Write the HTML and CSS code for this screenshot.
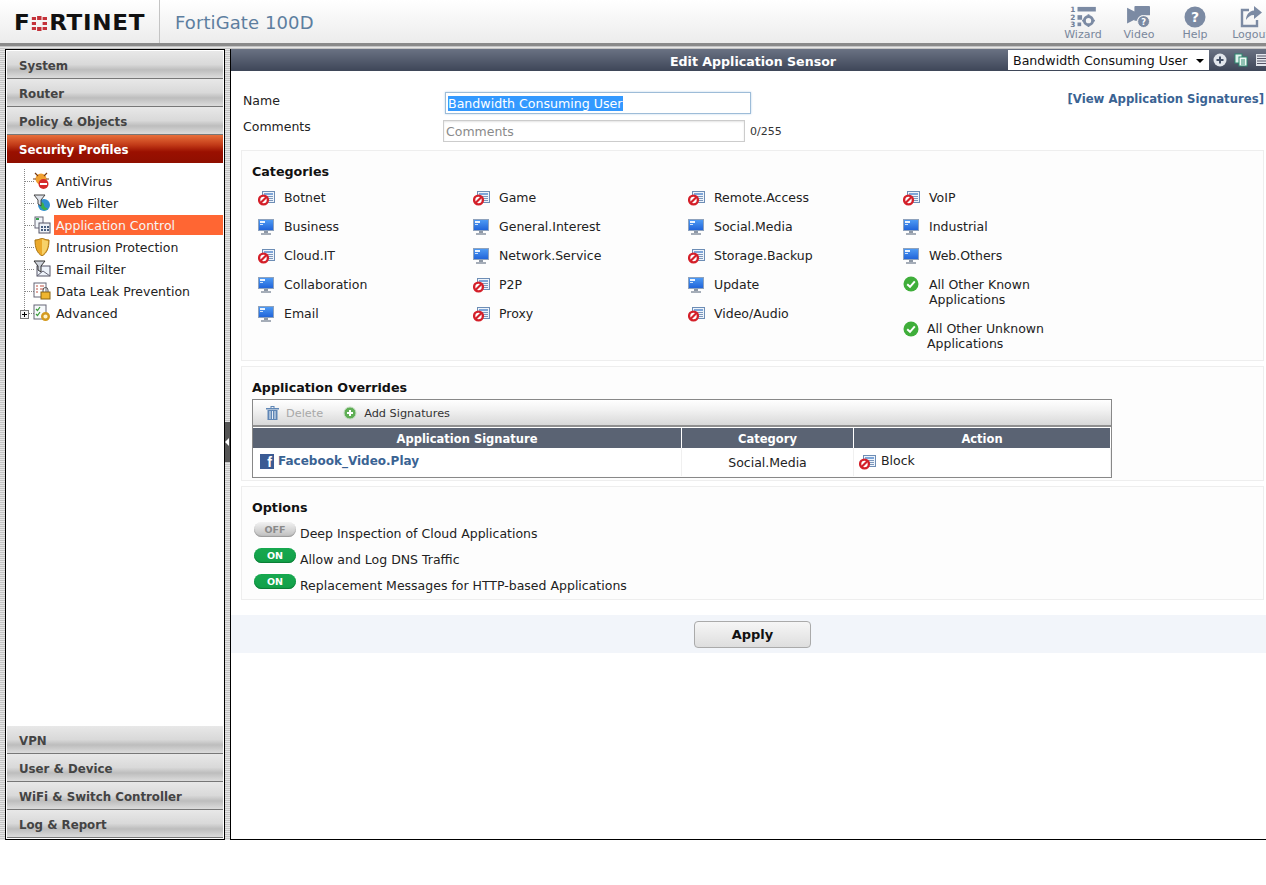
FILE: index.html
```html
<!DOCTYPE html>
<html lang="en">
<head>
<meta charset="utf-8">
<title>FortiGate 100D</title>
<link rel="stylesheet" href="styles.css">
</head>
<body>
<svg class="defs" width="0" height="0" aria-hidden="true">
  <defs>
    <linearGradient id="screen" x1="0" y1="0" x2="0" y2="1">
      <stop offset="0" stop-color="#4f9cf5"/>
      <stop offset="1" stop-color="#1f62d8"/>
    </linearGradient>
    <symbol id="doc" viewBox="0 0 18 18">
      <rect x="4.500" y="1.500" width="12" height="11" fill="#eef4fb" stroke="#6d8db5"/>
      <rect x="6" y="3" width="9" height="2" fill="#7fa6d8"/>
      <path d="M8 6.500h7M8 8.500h7M8 10.500h7" stroke="#7c97bb"/>
    </symbol>
    <symbol id="blocked" viewBox="0 0 18 18">
      <use href="#doc"/>
      <circle cx="5.500" cy="10" r="4.400" fill="#fff" stroke="#d4202a" stroke-width="2.400"/>
      <path d="M2.500 13 8.500 7" stroke="#d4202a" stroke-width="2.200"/>
    </symbol>
    <symbol id="monitor" viewBox="0 0 18 18">
      <rect x="0.500" y="0.500" width="15" height="11" fill="url(#screen)" stroke="#8ea2bd"/>
      <rect x="2" y="2" width="5" height="2" fill="#eaf3ff"/>
      <rect x="2" y="5" width="3" height="1" fill="#cfe2fb"/>
      <rect x="6" y="12" width="4" height="2" fill="#8e98a6"/>
      <rect x="3" y="14" width="10" height="2" fill="#a5adb8"/>
    </symbol>
    <symbol id="allowed" viewBox="0 0 16 16">
      <circle cx="8" cy="8" r="7.500" fill="#3fae3a"/>
      <path d="M4.200 8.200 7 10.800 11.800 5.400" fill="none" stroke="#fff" stroke-width="2"/>
    </symbol>
    <symbol id="plus" viewBox="0 0 14 14">
      <circle cx="7" cy="7" r="6" fill="#5fae55" stroke="#c3dcc0"/>
      <path d="M7 4v6M4 7h6" stroke="#fff" stroke-width="2"/>
    </symbol>
  </defs>
</svg>

<div class="app">
  <header class="topbar">
    <div class="brand">
      <span class="logo">F<svg class="logo-grid" width="14" height="15" viewBox="0 0 14 15" aria-hidden="true"><path fill="#c4323a" d="M0 1h4v3H0zM5 0h4v4H5zM10 1h4v3h-4zM0 6h4v3H0zM10 6h4v3h-4zM0 11h4v3H0zM5 11h4v4H5zM10 11h4v3h-4z"/></svg>RTINET</span>
    </div>
    <div class="product">FortiGate 100D</div>
    <nav class="tools">
      <div class="tool tool-wizard">
        <svg width="30" height="22" viewBox="0 0 30 24" aria-hidden="true"><g fill="#7b8aa3"><rect x="9" y="1" width="20" height="5"/><rect x="9" y="10" width="5" height="5"/><rect x="9" y="18" width="4" height="4"/><circle cx="21" cy="16" r="4.500" fill="none" stroke="#7b8aa3" stroke-width="3.200"/><path d="M20 9h2v2h-2zM20 21h2v2h-2zM14 15h2v2h-2zM26 15h2v2h-2z"/></g><text x="1" y="7" class="tool-num">1</text><text x="1" y="15" class="tool-num">2</text><text x="1" y="23" class="tool-num">3</text></svg>
        <span>Wizard</span>
      </div>
      <div class="tool tool-video">
        <svg width="26" height="22" viewBox="0 0 26 24" aria-hidden="true"><path fill="#7b8aa3" d="M0 2 8 6h0V1a1 1 0 0 1 1-1h15a1 1 0 0 1 1 1v9h-8a7 7 0 0 0-6 6H8v-1L0 19z"/><circle cx="18" cy="17" r="6.500" fill="#7b8aa3" stroke="#f4f4f4"/><text x="18" y="21" class="tool-q">?</text></svg>
        <span>Video</span>
      </div>
      <div class="tool tool-help">
        <svg width="22" height="22" viewBox="0 0 22 22" aria-hidden="true"><circle cx="11" cy="11" r="10.500" fill="#7b8aa3"/><text x="11" y="16" class="tool-help-q">?</text></svg>
        <span>Help</span>
      </div>
      <div class="tool tool-logout">
        <svg width="22" height="22" viewBox="0 0 22 22" aria-hidden="true"><path fill="none" stroke="#7b8aa3" stroke-width="2.400" d="M9 4H2v16h15v-6"/><path fill="#7b8aa3" d="M14 0l8 6.500-8 6.500V9c-4 0-6 2-8 5 0-5 3-9 8-9.500z"/></svg>
        <span>Logout</span>
      </div>
    </nav>
  </header>

  <div class="workspace">
    <aside class="sidebar">
      <div class="acc">System</div>
      <div class="acc">Router</div>
      <div class="acc">Policy &amp; Objects</div>
      <div class="acc acc-active">Security Profiles</div>
      <ul class="tree">
        <li class="tree-item">
          <svg class="tree-icon" viewBox="0 0 18 18" aria-hidden="true"><circle cx="8" cy="7" r="5.500" fill="#f0a030"/><path d="M2 1l3 3M14 1l-3 3M0 7h3M13 7h3" stroke="#7a3a10" stroke-width="1.200"/><circle cx="10.500" cy="12" r="5" fill="#d62a2a"/><rect x="7" y="11" width="7" height="2" fill="#fff"/></svg>
          <span>AntiVirus</span></li>
        <li class="tree-item">
          <svg class="tree-icon" viewBox="0 0 18 18" aria-hidden="true"><circle cx="11" cy="11" r="6" fill="#2f8fd0"/><path d="M7 9c2-2 4 0 4 2s3 4 4 3l-2 2c-3 1-6-3-6-7z" fill="#3cb04a"/><path d="M1 1h11L8 6v6L5 10V6z" fill="#dfe3ea" stroke="#444"/></svg>
          <span>Web Filter</span></li>
        <li class="tree-item tree-selected">
          <svg class="tree-icon" viewBox="0 0 18 18" aria-hidden="true"><rect x="2" y="1" width="8" height="11" fill="#f2f6fb" stroke="#667"/><rect x="3" y="2" width="3" height="2" fill="#3aa050"/><rect x="6" y="7" width="11" height="10" fill="#eef2f7" stroke="#556"/><path d="M8 10h2v2H8zM11 10h2v2h-2zM14 10h2v2h-2zM8 13h2v2H8zM11 13h2v2h-2zM14 13h2v2h-2z" fill="#4a6080"/></svg>
          <span class="tree-label">Application Control</span></li>
        <li class="tree-item">
          <svg class="tree-icon" viewBox="0 0 18 18" aria-hidden="true"><path d="M2 2c3 0 5-1 7-2 2 1 4 2 7 2 0 8-2 13-7 16C4 15 2 10 2 2z" fill="#eba92b" stroke="#a87412"/><path d="M9 1c2 1 4 2 6 2 0 7-2 11-6 14z" fill="#f7d26a"/></svg>
          <span>Intrusion Protection</span></li>
        <li class="tree-item">
          <svg class="tree-icon" viewBox="0 0 18 18" aria-hidden="true"><rect x="4" y="6" width="13" height="10" fill="#eef3fa" stroke="#556"/><path d="M4 16l6-5 7 5" fill="none" stroke="#667"/><path d="M1 1h11L8 6v6L5 10V6z" fill="#cfd4dc" stroke="#333"/></svg>
          <span>Email Filter</span></li>
        <li class="tree-item">
          <svg class="tree-icon" viewBox="0 0 18 18" aria-hidden="true"><rect x="1" y="1" width="12" height="14" fill="#fff" stroke="#667"/><path d="M3 4h2M7 4h4M3 7h2M7 7h4M3 10h2" stroke="#c05040"/><rect x="8" y="10" width="9" height="7" fill="#eeb52f" stroke="#8a6410"/><path d="M10 10V8a2.500 2.500 0 0 1 5 0v2" fill="none" stroke="#555"/></svg>
          <span>Data Leak Prevention</span></li>
        <li class="tree-item">
          <span class="expander"></span>
          <svg class="tree-icon" viewBox="0 0 18 18" aria-hidden="true"><rect x="1" y="1" width="12" height="14" fill="#f7f9fc" stroke="#667"/><path d="M3 5l1.500 1.500L7 3M3 10l1.500 1.500L7 8" fill="none" stroke="#3a9a3a" stroke-width="1.200"/><circle cx="12.500" cy="12.500" r="3.300" fill="#fff2c8" stroke="#d49a1f" stroke-width="2.400"/></svg>
          <span>Advanced</span></li>
      </ul>
      <div class="acc">VPN</div>
      <div class="acc">User &amp; Device</div>
      <div class="acc">WiFi &amp; Switch Controller</div>
      <div class="acc">Log &amp; Report</div>
    </aside>

    <div class="splitter"><span class="splitter-handle"></span></div>

    <main class="main">
      <div class="titlebar">
        <h1 class="title">Edit Application Sensor</h1>
        <div class="titlebar-tools">
          <div class="select">Bandwidth Consuming User<span class="caret"></span></div>
          <svg width="14" height="14" viewBox="0 0 14 14" aria-hidden="true"><circle cx="7" cy="7" r="6.500" fill="#e2e6ec"/><path d="M7 3.500v7M3.500 7h7" stroke="#445066" stroke-width="2"/></svg>
          <svg width="14" height="14" viewBox="0 0 14 14" aria-hidden="true"><rect x="1" y="1" width="7" height="9" fill="#dff2ec" stroke="#2e8a70"/><rect x="5" y="4" width="8" height="9" fill="#eef8f4" stroke="#2e8a70"/><path d="M7 7h4M7 9h4M7 11h4" stroke="#2e8a70"/></svg>
          <svg width="12" height="14" viewBox="0 0 12 14" aria-hidden="true"><rect x="1" y="1" width="11" height="12" fill="#e2e6ec"/><path d="M2 3h9M2 5.500h9M2 8h9M2 10.500h9" stroke="#556"/></svg>
        </div>
      </div>

      <div class="content">
        <form class="sensor-form">
          <div class="form-labels">
            <label class="label-name">Name</label>
            <label class="label-comments">Comments</label>
          </div>
          <div class="form-fields">
            <div class="input-name"><span class="selected-text">Bandwidth Consuming User</span></div>
            <div class="comments-row">
              <div class="input-comments">Comments</div>
              <span class="counter">0/255</span>
            </div>
          </div>
          <a class="view-link">[View Application Signatures]</a>
        </form>

        <section class="card card-categories">
          <h2 class="card-title">Categories</h2>
          <div class="cat-grid">
            <ul class="cat-col">
              <li class="cat"><svg class="cat-icon"><use href="#blocked"/></svg><span>Botnet</span></li>
              <li class="cat"><svg class="cat-icon"><use href="#monitor"/></svg><span>Business</span></li>
              <li class="cat"><svg class="cat-icon"><use href="#blocked"/></svg><span>Cloud.IT</span></li>
              <li class="cat"><svg class="cat-icon"><use href="#monitor"/></svg><span>Collaboration</span></li>
              <li class="cat"><svg class="cat-icon"><use href="#monitor"/></svg><span>Email</span></li>
            </ul>
            <ul class="cat-col">
              <li class="cat"><svg class="cat-icon"><use href="#blocked"/></svg><span>Game</span></li>
              <li class="cat"><svg class="cat-icon"><use href="#monitor"/></svg><span>General.Interest</span></li>
              <li class="cat"><svg class="cat-icon"><use href="#monitor"/></svg><span>Network.Service</span></li>
              <li class="cat"><svg class="cat-icon"><use href="#blocked"/></svg><span>P2P</span></li>
              <li class="cat"><svg class="cat-icon"><use href="#blocked"/></svg><span>Proxy</span></li>
            </ul>
            <ul class="cat-col">
              <li class="cat"><svg class="cat-icon"><use href="#blocked"/></svg><span>Remote.Access</span></li>
              <li class="cat"><svg class="cat-icon"><use href="#monitor"/></svg><span>Social.Media</span></li>
              <li class="cat"><svg class="cat-icon"><use href="#blocked"/></svg><span>Storage.Backup</span></li>
              <li class="cat"><svg class="cat-icon"><use href="#monitor"/></svg><span>Update</span></li>
              <li class="cat"><svg class="cat-icon"><use href="#blocked"/></svg><span>Video/Audio</span></li>
            </ul>
            <ul class="cat-col">
              <li class="cat"><svg class="cat-icon"><use href="#blocked"/></svg><span>VoIP</span></li>
              <li class="cat"><svg class="cat-icon"><use href="#monitor"/></svg><span>Industrial</span></li>
              <li class="cat"><svg class="cat-icon"><use href="#monitor"/></svg><span>Web.Others</span></li>
              <li class="cat cat-wrap"><svg class="cat-icon cat-icon-ok"><use href="#allowed"/></svg><span>All Other Known<br>Applications</span></li>
              <li class="cat cat-wrap cat-unknown"><svg class="cat-icon cat-icon-ok"><use href="#allowed"/></svg><span>All Other Unknown<br>Applications</span></li>
            </ul>
          </div>
        </section>

        <section class="card card-overrides">
          <h2 class="card-title">Application Overrides</h2>
          <div class="grid-box">
            <div class="grid-toolbar">
              <span class="btn-delete"><svg width="13" height="14" viewBox="0 0 13 14" aria-hidden="true"><path fill="#5f86b5" d="M0 2h13v1.500H0zM4.500 0h4v2h-1V1h-2v1h-1zM1.500 4h10v10h-10z"/><path stroke="#e8eef6" d="M4 5v8M6.500 5v8M9 5v8"/></svg>Delete</span>
              <span class="btn-add"><svg width="14" height="14" aria-hidden="true"><use href="#plus"/></svg>Add Signatures</span>
            </div>
            <table class="grid">
              <thead>
                <tr><th class="col-sig">Application Signature</th><th class="col-cat">Category</th><th>Action</th></tr>
              </thead>
              <tbody>
                <tr>
                  <td class="cell-sig"><span class="fb-icon">f</span><a class="sig-link">Facebook_Video.Play</a></td>
                  <td class="cell-cat">Social.Media</td>
                  <td class="cell-action"><svg class="cat-icon"><use href="#blocked"/></svg><span>Block</span></td>
                </tr>
              </tbody>
            </table>
          </div>
        </section>

        <section class="card card-options">
          <h2 class="card-title">Options</h2>
          <div class="option"><span class="toggle toggle-off">OFF</span><span class="option-text">Deep Inspection of Cloud Applications</span></div>
          <div class="option"><span class="toggle toggle-on">ON</span><span class="option-text">Allow and Log DNS Traffic</span></div>
          <div class="option"><span class="toggle toggle-on">ON</span><span class="option-text">Replacement Messages for HTTP-based Applications</span></div>
        </section>

        <div class="apply-bar"><button class="apply" type="button">Apply</button></div>
      </div>
    </main>
  </div>
</div>
</body>
</html>
```
FILE: styles.css
```css
* { box-sizing: border-box; }
html, body { margin: 0; padding: 0; background: #fff; }
body { font-family: "DejaVu Sans", Verdana, sans-serif; font-size: 12.5px; color: #222; overflow: hidden; }
ul { list-style: none; margin: 0; padding: 0; }
h1, h2 { margin: 0; }
.defs { position: absolute; }

.app { height: 840px; display: flex; flex-direction: column; width: 1266px; overflow: hidden; }

/* top bar */
.topbar { height: 46px; flex: none; display: flex; align-items: stretch; background: linear-gradient(#ffffff, #ececec); border-bottom: 3px solid #8a8a8a; }
.brand { width: 160px; flex: none; border-right: 1px solid #c4c4c4; padding: 10px 0 0 14px; }
.logo { display: flex; align-items: center; width: fit-content; font: bold 21px/26px "DejaVu Sans", sans-serif; color: #111; letter-spacing: 0.6px; transform: scaleX(1.1); transform-origin: left center; }
.logo-grid { margin: 0 2px 0 1px; flex: none; }
.product { padding: 11px 0 0 15px; font-size: 18px; line-height: 24px; color: #5d7e9f; letter-spacing: 0.1px; }
.tools { margin-left: auto; display: flex; width: 211px; flex: none; overflow: hidden; }
.tool { display: flex; flex-direction: column; align-items: center; width: 56px; flex: none; padding-top: 6px; font-size: 11px; line-height: 12px; color: #79879c; }
.tool svg { display: block; height: 22px; margin-bottom: 1px; }
.tool-num { font: bold 8px "DejaVu Sans", sans-serif; fill: #6f7f98; }
.tool-q { font: bold 9px "DejaVu Sans", sans-serif; fill: #fff; text-anchor: middle; }
.tool-help-q { font: bold 14px "DejaVu Sans", sans-serif; fill: #fff; text-anchor: middle; }

/* workspace */
.workspace { flex: 1; min-height: 0; display: flex; padding: 3px 0 0 5px; background: repeating-linear-gradient(#c4c4c4 0 1px, #e6e6e6 1px 2px); }

/* sidebar */
.sidebar { width: 220px; flex: none; display: flex; flex-direction: column; background: #fff; border: 1px solid #000; padding: 1px 1px 1px; }
.acc { height: 28px; flex: none; padding: 0 0 0 12px; font-weight: bold; font-size: 11.8px; line-height: 31px; color: #444; border-bottom: 1px solid #777; background: linear-gradient(#e8e8e8 0, #d9d9d9 50%, #bdbdbd 70%, #dcdcdc 100%); }
.acc-active { color: #fff; border-bottom: 0; background: linear-gradient(#e8703c 0, #c23b18 35%, #9a1000 60%, #8f0f00 100%); }
.tree { flex: 1; padding: 8px 0 0; position: relative; }
.tree::before { content: ""; position: absolute; left: 17px; top: 6px; height: 143px; border-left: 1px dotted #888; }
.tree-item { position: relative; height: 22px; padding-left: 49px; display: flex; align-items: center; line-height: 20px; color: #222; }
.tree-item::before { content: ""; position: absolute; left: 18px; top: 10px; width: 9px; border-top: 1px dotted #888; }
.tree-icon { position: absolute; left: 26px; top: 1px; width: 18px; height: 18px; }
.tree-selected .tree-label { background: #ff6633; color: #f6f6f6; margin-left: -2px; padding-left: 2px; flex: 1; height: 20px; line-height: 22px; margin-top: -2px; }
.expander { position: absolute; left: 13px; top: 7px; width: 9px; height: 9px; z-index: 1; border: 1px solid #777; background: linear-gradient(#000, #000) center / 5px 1px no-repeat, linear-gradient(#000, #000) center / 1px 5px no-repeat, #f4f4f4; }

/* splitter */
.splitter { width: 5px; flex: none; display: flex; align-items: flex-start; padding-top: 373px; }
.splitter-handle { display: block; width: 5px; height: 40px; background: #555; position: relative; }
.splitter-handle::after { content: ""; position: absolute; left: 0; top: 16px; border: 4px solid transparent; border-right-color: #fff; border-left-width: 0; }

/* main */
.main { flex: 1; min-width: 0; display: flex; flex-direction: column; background: #fff; border-left: 1px solid #000; border-bottom: 1px solid #000; }
.titlebar { height: 22px; flex: none; position: relative; display: flex; justify-content: center; align-items: center; padding-left: 9px; background: linear-gradient(#6a7283, #3e4658); }
.title { font-size: 12.6px; font-weight: bold; color: #fff; line-height: 22px; margin-top: 3px; }
.titlebar-tools { position: absolute; right: -1px; top: 1px; display: flex; align-items: center; gap: 7px; }
.select { width: 201px; height: 20px; background: #fff; color: #111; font-size: 12.6px; line-height: 21px; padding-left: 5px; position: relative; margin-right: -3px; }
.caret { position: absolute; right: 5px; top: 9px; border: 4px solid transparent; border-top-color: #000; border-bottom-width: 0; }

.content { flex: 1; min-height: 0; padding: 0 2px 0 10px; }
.sensor-form { height: 79px; display: flex; padding: 18px 0 0 2px; position: relative; }
.form-labels { width: 200px; flex: none; display: flex; flex-direction: column; padding-top: 1px; }
.label-name { line-height: 22px; }
.label-comments { line-height: 18px; margin-top: 6px; }
.form-fields { display: flex; flex-direction: column; gap: 6px; padding-top: 3px; }
.input-name { margin-left: 2px; width: 306px; height: 22px; border: 1px solid #9dbcd8; padding: 3px 2px 2px; line-height: 15px; box-shadow: 0 0 2px #bcd3ea; font-size: 12.6px; }
.selected-text { display: block; width: fit-content; background: #3399ff; color: #fff; }
.comments-row { display: flex; align-items: center; gap: 5px; }
.input-comments { width: 302px; height: 22px; border: 1px solid #ccc; padding: 2px; line-height: 18px; color: #8a8a8a; box-shadow: inset 0 1px 2px #e4e4e4; }
.counter { font-size: 11px; color: #333; }
.view-link { margin-left: auto; margin-top: 1px; font-weight: bold; font-size: 11.7px; line-height: 18px; color: #3a6393; }

.card { border: 1px solid #eeeeee; background: #fdfdfd; margin: 0 0 5px; padding: 0 10px; }
.card-title { font-size: 12.7px; font-weight: bold; color: #111; line-height: 18px; }
.card-categories { height: 211px; padding-top: 12px; }
.cat-grid { display: grid; grid-template-columns: repeat(4, 215px); padding: 4px 0 0 6px; }
.cat { display: flex; align-items: flex-start; height: 29px; position: relative; padding-left: 26px; line-height: 18px; padding-top: 4px; }
.cat-icon { position: absolute; left: 0; top: 5px; width: 18px; height: 18px; }
.cat-wrap { line-height: 15px; height: auto; padding-top: 5px; padding-bottom: 9px; }
.cat-icon-ok { width: 16px; height: 16px; left: 0; top: 4px; }
.cat-unknown { padding-left: 24px; }
.cat-unknown .cat-icon-ok { top: 5px; }

.card-overrides { height: 115px; padding-top: 12px; }
.grid-box { width: 860px; height: 79px; border: 1px solid #888; margin-top: 2px; }
.grid-toolbar { height: 27px; display: flex; align-items: center; padding: 1px 0 0 13px; gap: 20px; background: linear-gradient(#ffffff, #f2f2f2 40%, #d8d8d8); border-bottom: 2px solid #8f8f8f; font-size: 11.3px; }
.btn-delete, .btn-add { display: flex; align-items: center; gap: 7px; }
.btn-delete { color: #a8a8a8; }
.btn-add { color: #333; }
.grid { width: 100%; border-collapse: separate; border-spacing: 0; table-layout: fixed; background: #fff; border-top: 1px solid #fff; }
.grid th { height: 20px; background: #5a6373; color: #fff; font-size: 11.5px; font-weight: bold; text-align: center; padding: 1px 0 0; border-right: 1px solid #fff; line-height: 18px; }
.col-sig { width: 429px; }
.col-cat { width: 172px; }
.grid td { height: 28px; padding: 0; border-right: 1px solid #f0f0f0; }
.cell-sig { padding: 0 0 2px 7px !important; white-space: nowrap; }
.fb-icon { display: inline-block; vertical-align: middle; width: 14px; height: 15px; margin-right: 4px; background: #3b5b94; color: #fff; font: bold 14px/17px "Liberation Sans", sans-serif; text-align: right; padding-right: 2px; overflow: hidden; }
.sig-link { font-weight: bold; font-size: 12px; color: #3a6393; }
.cell-cat { text-align: center; padding-bottom: 0 !important; }
.cell-action { position: relative; padding: 0 0 3px 27px !important; }
.cell-action .cat-icon { left: 5px; top: 6px; }

.card-options { height: 114px; padding-top: 12px; }
.option { height: 26px; display: flex; align-items: flex-start; gap: 4px; padding-left: 2px; }
.toggle { width: 42px; height: 15px; flex: none; border-radius: 8px; font-size: 9.5px; font-weight: bold; line-height: 15px; text-align: center; margin-top: 5px; }
.toggle-off { background: linear-gradient(#f2f2f2, #bdbdbd); color: #8a8a8a; box-shadow: inset 0 -1px 1px #999; }
.toggle-on { background: linear-gradient(#17a84f, #12a049); color: #fff; box-shadow: inset 0 -1px 1px #0a7a34; }
.option-text { line-height: 18px; margin-top: 8px; }

.apply-bar { height: 38px; margin: 15px -2px 0 -10px; background: #f2f5fa; display: flex; justify-content: center; align-items: center; padding-left: 8px; }
.apply { width: 117px; height: 27px; border: 1px solid #aaa; border-radius: 4px; background: linear-gradient(#f6f6f6, #dedede); font: bold 13px "DejaVu Sans", sans-serif; color: #111; padding: 0; }
```
